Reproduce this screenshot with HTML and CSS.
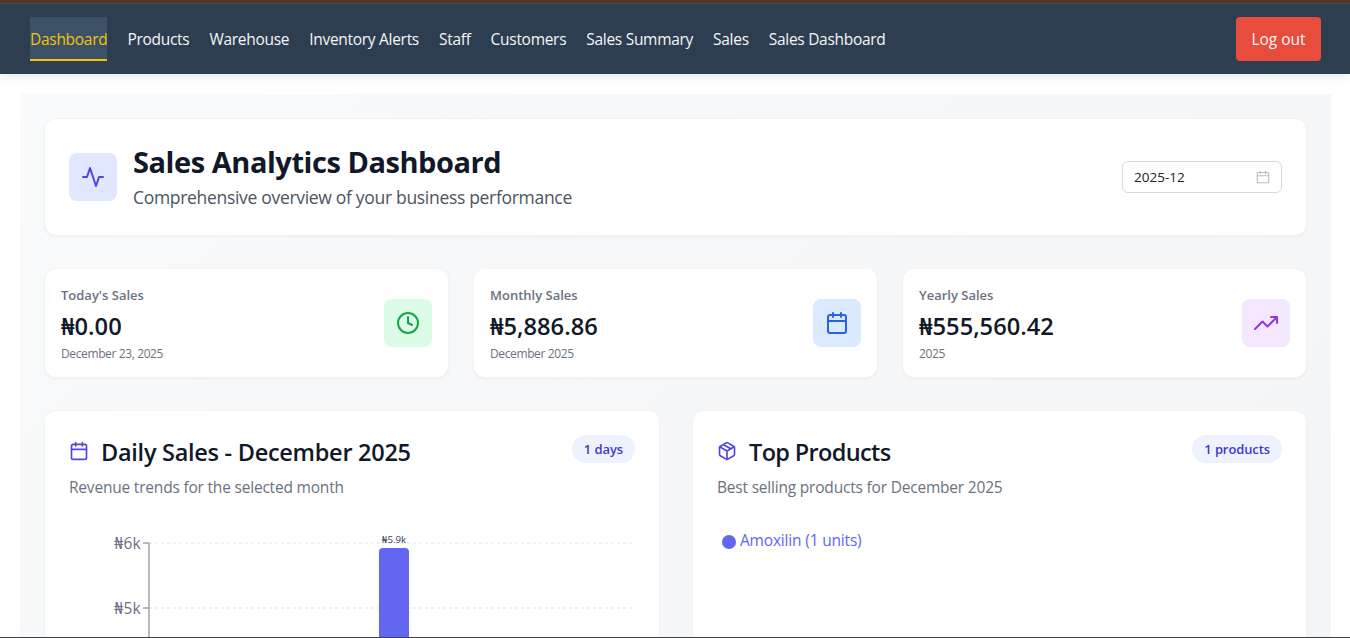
FILE: index.html
```html
<!DOCTYPE html>
<html lang="en">
<head>
    <meta charset="UTF-8">
    <meta name="viewport" content="width=device-width, initial-scale=1.0">
    <title>Sales Analytics Dashboard</title>
    <link rel="stylesheet" href="styles.css">
</head>
<body>
    <header class="navbar">
        <nav class="nav-links">
            <a class="active" href="#">Dashboard</a>
            <a href="#">Products</a>
            <a href="#">Warehouse</a>
            <a href="#">Inventory Alerts</a>
            <a href="#">Staff</a>
            <a href="#">Customers</a>
            <a href="#">Sales Summary</a>
            <a href="#">Sales</a>
            <a href="#">Sales Dashboard</a>
        </nav>
        <button class="logout">Log out</button>
    </header>

    <main class="dashboard">
        <section class="card page-header">
            <div class="page-title">
                <div class="icon-box indigo">
                    <svg class="icon" width="24" height="24" viewBox="0 0 24 24"><polyline points="22 12 18 12 15 21 9 3 6 12 2 12"/></svg>
                </div>
                <div>
                    <h1>Sales Analytics Dashboard</h1>
                    <p>Comprehensive overview of your business performance</p>
                </div>
            </div>
            <div class="month-picker">
                <span>2025-12</span>
                <svg width="14" height="14" viewBox="64 64 896 896" fill="currentColor"><path d="M880 184H712v-64c0-4.400-3.600-8-8-8h-56c-4.400 0-8 3.600-8 8v64H384v-64c0-4.400-3.600-8-8-8h-56c-4.400 0-8 3.600-8 8v64H144c-17.700 0-32 14.300-32 32v664c0 17.700 14.300 32 32 32h736c17.700 0 32-14.300 32-32V216c0-17.700-14.300-32-32-32zm-40 656H184V460h656v380zM184 392V256h128v48c0 4.400 3.600 8 8 8h56c4.400 0 8-3.600 8-8v-48h256v48c0 4.400 3.600 8 8 8h56c4.400 0 8-3.600 8-8v-48h128v136H184z"/></svg>
            </div>
        </section>

        <section class="stats">
            <div class="card stat">
                <div>
                    <p class="stat-label">Today's Sales</p>
                    <p class="stat-value">₦0.00</p>
                    <p class="stat-note">December 23, 2025</p>
                </div>
                <div class="icon-box green">
                    <svg class="icon" width="24" height="24" viewBox="0 0 24 24"><circle cx="12" cy="12" r="10"/><polyline points="12 6 12 12 16 14"/></svg>
                </div>
            </div>
            <div class="card stat">
                <div>
                    <p class="stat-label">Monthly Sales</p>
                    <p class="stat-value">₦5,886.86</p>
                    <p class="stat-note">December 2025</p>
                </div>
                <div class="icon-box blue">
                    <svg class="icon" width="24" height="24" viewBox="0 0 24 24"><rect x="3" y="4" width="18" height="18" rx="2"/><path d="M16 2v4M8 2v4M3 10h18"/></svg>
                </div>
            </div>
            <div class="card stat">
                <div>
                    <p class="stat-label">Yearly Sales</p>
                    <p class="stat-value">₦555,560.42</p>
                    <p class="stat-note">2025</p>
                </div>
                <div class="icon-box purple">
                    <svg class="icon" width="24" height="24" viewBox="0 0 24 24"><polyline points="23 6 13.500 15.500 8.500 10.500 1 18"/><polyline points="17 6 23 6 23 12"/></svg>
                </div>
            </div>
        </section>

        <section class="panels">
            <div class="card panel">
                <div class="panel-head">
                    <div>
                        <h2>
                            <svg class="icon" width="20" height="20" viewBox="0 0 24 24"><rect x="3" y="4" width="18" height="18" rx="2"/><path d="M16 2v4M8 2v4M3 10h18"/></svg>
                            <span>Daily Sales - December 2025</span>
                        </h2>
                        <p>Revenue trends for the selected month</p>
                    </div>
                    <span class="badge">1 days</span>
                </div>
                <svg class="chart" width="566" height="115" viewBox="0 0 566 115">
                    <g class="grid">
                        <line x1="80" y1="20" x2="564" y2="20"/>
                        <line x1="80" y1="85" x2="564" y2="85"/>
                    </g>
                    <g class="axis">
                        <line x1="80" y1="20" x2="80" y2="115"/>
                        <line x1="74" y1="20" x2="80" y2="20"/>
                        <line x1="74" y1="85" x2="80" y2="85"/>
                    </g>
                    <g class="ticks">
                        <text x="72" y="26">₦6k</text>
                        <text x="72" y="91">₦5k</text>
                    </g>
                    <path class="bar" d="M310 115V29a4 4 0 0 1 4-4h22a4 4 0 0 1 4 4v86z"/>
                    <text class="bar-label" x="325" y="20">₦5.9k</text>
                </svg>
            </div>

            <div class="card panel">
                <div class="panel-head">
                    <div>
                        <h2 class="top-title">
                            <svg class="icon" width="20" height="20" viewBox="0 0 24 24"><path d="M16.500 9.400l-9-5.190M21 16V8a2 2 0 0 0-1-1.730l-7-4a2 2 0 0 0-2 0l-7 4A2 2 0 0 0 3 8v8a2 2 0 0 0 1 1.730l7 4a2 2 0 0 0 2 0l7-4A2 2 0 0 0 21 16z"/><path d="M3.270 6.960L12 12.010l8.730-5.050M12 22.080V12"/></svg>
                            <span>Top Products</span>
                        </h2>
                        <p>Best selling products for December 2025</p>
                    </div>
                    <span class="badge">1 products</span>
                </div>
                <div class="legend">
                    <span class="legend-dot"></span>
                    <span>Amoxilin (1 units)</span>
                </div>
            </div>
        </section>
    </main>
</body>
</html>
```

FILE: styles.css
```css
* {
    box-sizing: border-box;
    margin: 0;
    padding: 0;
}

body {
    height: 638px;
    overflow: hidden;
    display: flex;
    flex-direction: column;
    background: #fff;
    border-bottom: 1px solid #3f3f46;
    font-family: "Open Sans", "Noto Sans", sans-serif;
}

.navbar {
    flex: none;
    position: relative;
    display: flex;
    justify-content: space-between;
    align-items: center;
    height: 74px;
    padding: 1px 29px 0 30px;
    background: #2c3e50;
    border-top: 3px solid #4f3527;
    box-shadow: inset 0 1px 0 #584a42, 0 2px 10px rgba(0, 0, 0, 0.1);
}

.nav-links {
    display: flex;
    gap: 20px;
}

.nav-links a {
    height: 44px;
    line-height: 45px;
    color: #f4f6f7;
    font-size: 15.500px;
    font-weight: 500;
    letter-spacing: -0.290px;
    white-space: nowrap;
    text-decoration: none;
}

.nav-links .active {
    color: #f1c40f;
    background: #3d5166;
    border-bottom: 2px solid #f1c40f;
}

.logout {
    width: 85px;
    height: 44px;
    background: #e74c3c;
    color: #f4f6f7;
    border: none;
    border-radius: 4px;
    font-family: inherit;
    font-size: 15.500px;
    font-weight: 500;
}

.dashboard {
    flex: 1;
    min-height: 0;
    overflow: hidden;
    margin: 20px 19px 0 20px;
    padding: 24px 24px 0;
    background: linear-gradient(135deg, #f9fafb, #f3f4f6) 0 0 / 100% 900px;
}

.card {
    background: #fff;
    border: 1px solid #f3f4f6;
    border-radius: 12px;
    box-shadow: 0 1px 2px rgba(0, 0, 0, 0.05);
}

.page-header {
    display: flex;
    justify-content: space-between;
    align-items: center;
    height: 118px;
    padding: 24px;
    margin-bottom: 32px;
}

.page-title {
    display: flex;
    align-items: center;
    gap: 16px;
}

.page-title h1 {
    padding-top: 1px;
    color: #111827;
    font-size: 29px;
    font-weight: 700;
    letter-spacing: -0.450px;
    line-height: 36px;
}

.page-title p {
    margin-top: 3px;
    color: #4b5563;
    font-size: 17.500px;
    letter-spacing: -0.310px;
    line-height: 28px;
}

.icon {
    flex: none;
    fill: none;
    stroke: currentColor;
    stroke-width: 2;
    stroke-linecap: round;
    stroke-linejoin: round;
}

.icon-box {
    display: flex;
    align-items: center;
    justify-content: center;
    width: 48px;
    height: 48px;
    border-radius: 8px;
}

.indigo { background: #e0e7ff; color: #4f46e5; }
.green { background: #dcfce7; color: #16a34a; }
.blue { background: #dbeafe; color: #2563eb; }
.purple { background: #f3e8ff; color: #9333ea; }

.month-picker {
    display: flex;
    justify-content: space-between;
    align-items: center;
    width: 160px;
    height: 32px;
    padding: 0 11px;
    border: 1px solid #d9d9d9;
    border-radius: 6px;
    color: #222;
    font-size: 13.500px;
}

.month-picker svg {
    color: #bfbfbf;
}

.stats {
    display: grid;
    grid-template-columns: repeat(3, 1fr);
    gap: 24px;
    margin-bottom: 32px;
}

.stat {
    display: flex;
    justify-content: space-between;
    align-items: center;
    height: 110px;
    padding: 16px;
}

.stat-label {
    color: #6b7280;
    font-size: 13px;
    font-weight: 600;
    line-height: 20px;
}

.stat-value {
    margin: 5px 0 3px;
    color: #111827;
    font-size: 23.700px;
    font-weight: 600;
    line-height: 32px;
}

.stat-note {
    padding-top: 1px;
    margin-bottom: -1px;
    color: #6b7280;
    font-size: 12px;
    letter-spacing: -0.380px;
    line-height: 16px;
}

.panels {
    display: grid;
    grid-template-columns: 1fr 1fr;
    gap: 32px;
}

.panel {
    height: 520px;
    padding: 24px;
}

.panel-head {
    display: flex;
    justify-content: space-between;
    align-items: flex-start;
}

.panel h2 {
    display: flex;
    align-items: center;
    gap: 12px;
    color: #111827;
    font-size: 23.500px;
    font-weight: 600;
    letter-spacing: -0.270px;
    line-height: 32px;
}

.panel h2 span {
    position: relative;
    top: 1px;
}

.panel .top-title {
    letter-spacing: -0.650px;
}

.panel h2 .icon {
    color: #4f46e5;
}

.panel-head p {
    margin-top: 8px;
    color: #6b7280;
    font-size: 15.500px;
    letter-spacing: -0.200px;
    line-height: 24px;
}

.badge {
    padding: 4px 12px;
    border-radius: 14px;
    background: #eef2ff;
    color: #4338ca;
    font-size: 13px;
    font-weight: 600;
    letter-spacing: -0.100px;
    line-height: 20px;
}

.chart {
    display: block;
    margin-top: 24px;
}

.grid line {
    stroke: #f0f0f0;
    stroke-width: 2;
    stroke-dasharray: 3 3;
}

.axis line {
    stroke: #9ca3af;
    stroke-width: 1.500;
}

.ticks text {
    fill: #6b7280;
    font-size: 15.500px;
    letter-spacing: 0.300px;
    text-anchor: end;
}

.bar {
    fill: #6366f1;
}

.bar-label {
    fill: #374151;
    font-size: 9.700px;
    text-anchor: middle;
}

.legend {
    display: flex;
    align-items: center;
    gap: 4px;
    margin: 29px 0 0 5px;
    color: #6366f1;
    font-size: 15.500px;
    letter-spacing: -0.180px;
    line-height: 24px;
}

.legend-dot {
    width: 14px;
    height: 14px;
    margin-top: 3px;
    border-radius: 50%;
    background: #6366f1;
}
```
